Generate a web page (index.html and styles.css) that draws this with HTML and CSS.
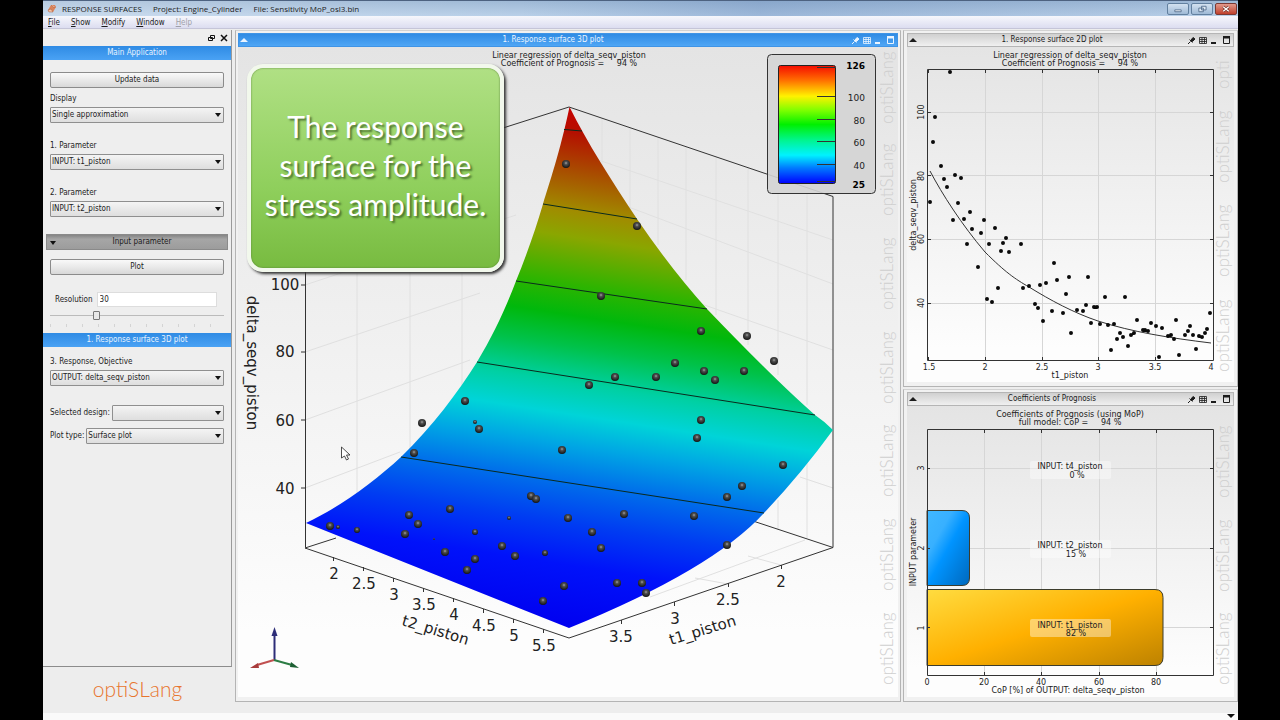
FILE: index.html
```html
<!DOCTYPE html>
<html lang="en">
<head>
<meta charset="utf-8">
<title>RESPONSE SURFACES - Engine_Cylinder</title>
<link rel="stylesheet" href="styles.css">
</head>
<body>
<svg class="defs" aria-hidden="true">
  <defs>
    <symbol id="panel-tools" viewBox="0 0 44 10">
      <path d="M1 9 3.500 6.500M2.500 4.500 5.500 7.500M4 5 6 2.500 8 4 5.500 6.500z" fill="currentColor" stroke="currentColor" stroke-width="1"/>
      <path d="M12.500 2.500h7v6h-7zM12.500 4.500h7M12.500 6.500h7M15 2.500v6M17.500 2.500v6" fill="none" stroke="currentColor" stroke-width=".8"/>
      <path d="M24 7h5v2h-5z" fill="currentColor"/>
      <path d="M36.500 2.500h6v6h-6z" fill="none" stroke="currentColor"/><path d="M36 1h7v2.500h-7z" fill="currentColor"/>
    </symbol>
    <symbol id="collapse" viewBox="0 0 8 6"><path d="M0 5 4 1l4 4z" fill="currentColor"/></symbol>
  </defs>
</svg>
<div class="app">
  <header class="titlebar">
    <svg class="app-icon" viewBox="0 0 10 10"><path d="M1 6 4 1h4l1 2-3 5H2z" fill="#d9835c"/><path d="M1 6l3-1 2 3H2zM4 1l2 2 3 0" fill="#f4c4a8" stroke="#a85b3b" stroke-width=".5"/></svg>
    <span>RESPONSE SURFACES</span><span>Project: Engine_Cylinder</span><span>File: Sensitivity MoP_osl3.bin</span>
    <div class="win-buttons">
      <button aria-label="Minimize"><svg viewBox="0 0 22 11"><path d="M7.500 6.500h7v2h-7z" fill="#fff" stroke="#56718f"/></svg></button>
      <button aria-label="Restore"><svg viewBox="0 0 22 11"><path d="M10.500 2.500h5v4h-5zM7.500 4.500h5v4h-5z" fill="#dfe9f4" stroke="#56718f"/></svg></button>
      <button class="close" aria-label="Close"><svg viewBox="0 0 22 11"><path d="m8 3 6 5m0-5-6 5" stroke="#6b2a22" stroke-width="3"/><path d="m8 3 6 5m0-5-6 5" stroke="#fff" stroke-width="1.500"/></svg></button>
    </div>
  </header>
  <nav class="menubar">
    <button><u>F</u>ile</button><button><u>S</u>how</button><button><u>M</u>odify</button><button><u>W</u>indow</button><button disabled><u>H</u>elp</button>
  </nav>
  <main class="workspace">
    <div class="side-column">
      <aside class="sidebar">
        <div class="dock">
          <button aria-label="Float"><svg viewBox="0 0 8 8"><path d="M2.500 1.500h4v3h-4zM.5 3.500h4v3h-4z" fill="#eee" stroke="#111"/></svg></button>
          <button aria-label="Close panel"><svg viewBox="0 0 8 8"><path d="m1 1 6 6m0-6-6 6" stroke="#111" stroke-width="1.500"/></svg></button>
        </div>
        <h2 class="section-title">Main Application</h2>
        <form class="fields">
          <button type="button" class="push">Update data</button>
          <div class="field"><label for="display">Display</label><span class="combo"><select id="display"><option>Single approximation</option></select></span></div>
          <div class="field spaced"><label for="p1">1. Parameter</label><span class="combo"><select id="p1"><option>INPUT: t1_piston</option></select></span></div>
          <div class="field spaced"><label for="p2">2. Parameter</label><span class="combo"><select id="p2"><option>INPUT: t2_piston</option></select></span></div>
          <button type="button" class="fold">Input parameter</button>
          <button type="button" class="push">Plot</button>
          <div class="resolution"><label for="res">Resolution</label><input id="res" type="text" value="30"></div>
          <div class="slider"><input type="range" min="0" max="100" value="26" aria-label="Resolution slider"></div>
        </form>
        <h2 class="section-title">1. Response surface 3D plot</h2>
        <form class="fields plot-fields">
          <div class="field"><label for="resp">3. Response, Objective</label><span class="combo"><select id="resp"><option>OUTPUT: delta_seqv_piston</option></select></span></div>
          <div class="row first"><label for="sel">Selected design:</label><span class="combo"><select id="sel"><option></option></select></span></div>
          <div class="row"><label for="type">Plot type:</label><span class="combo"><select id="type"><option>Surface plot</option></select></span></div>
        </form>
      </aside>
      <div class="logo">optiSLang</div>
    </div>

    <section class="panel panel-3d">
      <h2 class="panel-title active"><svg class="collapse"><use href="#collapse"/></svg><span>1. Response surface 3D plot</span><svg class="tools"><use href="#panel-tools"/></svg></h2>
      <div class="panel-body">
        <svg class="plot" viewBox="238 47 660 650">
          <defs>
            <linearGradient id="surf" gradientUnits="userSpaceOnUse" x1="569" y1="106" x2="491" y2="616">
              <stop offset="0" stop-color="#c80000"/><stop offset=".05" stop-color="#b41000"/><stop offset=".12" stop-color="#a94a00"/><stop offset=".2" stop-color="#a08c00"/><stop offset=".25" stop-color="#8aa600"/><stop offset=".34" stop-color="#2eb400"/><stop offset=".4" stop-color="#00b80c"/><stop offset=".46" stop-color="#00c24a"/><stop offset=".53" stop-color="#00d0a4"/><stop offset=".59" stop-color="#00d4d8"/><stop offset=".65" stop-color="#00a6e4"/><stop offset=".72" stop-color="#006fea"/><stop offset=".8" stop-color="#003cf2"/><stop offset=".88" stop-color="#0012fa"/><stop offset="1" stop-color="#0000f0"/>
            </linearGradient>
            <linearGradient id="scale" x1="0" y1="0" x2="0" y2="1">
              <stop offset="0" stop-color="#f50c00"/><stop offset=".12" stop-color="#ff6a00"/><stop offset=".26" stop-color="#fff200"/><stop offset=".38" stop-color="#7dff00"/><stop offset=".5" stop-color="#00f000"/><stop offset=".63" stop-color="#00f58c"/><stop offset=".76" stop-color="#00f2ff"/><stop offset=".87" stop-color="#0078ff"/><stop offset="1" stop-color="#0000ff"/>
            </linearGradient>
            <radialGradient id="ball" cx=".5" cy=".38" r=".6"><stop offset="0" stop-color="#a0a0a0"/><stop offset=".35" stop-color="#4c4c4c"/><stop offset="1" stop-color="#151515"/></radialGradient>
          </defs>
          <g class="watermark">
            <text transform="translate(893 685) rotate(-90)">optiSLang</text><text transform="translate(893 591) rotate(-90)">optiSLang</text><text transform="translate(893 497) rotate(-90)">optiSLang</text><text transform="translate(893 404) rotate(-90)">optiSLang</text><text transform="translate(893 310) rotate(-90)">optiSLang</text><text transform="translate(893 216) rotate(-90)">optiSLang</text><text transform="translate(893 124) rotate(-90)">optiSLang</text>
          </g>
          <path class="grid" d="M357 272V500M410 272V470M462 272V390M602 118V170M630 127V210M658 137V245M686 146V280M716 156V315M748 167V345M778 178V375M807 188V405M807 455V538M778 500V530M305 285 516 215M305 352 480 293M305 420 470 360M305 488 400 452M569 150 833 240M610 200 833 284M690 300 833 350M800 477 833 488M650 597 805 540M695 578 728 584M748 556 781 565"/>
          <path class="axis" d="M305.500 190V547.500M305 548 569 638 833 547.500M305 191 569 107 833 196.500V547.500M305 548l31-10M753 521l80 26.500M301 285h4M301 352h4M301 420h4M301 488h4M333.500 557v4M363.500 567v4M393.500 578v4M423.500 588v4M453.500 598v4M483.500 609v4M513.500 619v4M543.500 629v4M781.500 565v4M728.500 583v4M674.500 602v4M621.500 620v4"/>
          <path fill="url(#surf)" d="M569.500 107C560 152 549 184 543 204 536 228 527 254 516 281 507 305 494 334 477 362 458 392 433 426 401 457 375 481 342 506 306 523L569 628Q712 570 764 513 801 474 833 430 824 421 815 415 777 382 707 309 671 269 637 219C610 178 588 144 569.500 107z"/>
          <path class="contour" d="M401 457 764 513M477 362 815 415M516 281 707 309M543 204 637 219M564 129.500 582 131"/>
          <g fill="url(#ball)">
            <circle cx="566" cy="164" r="4"/><circle cx="637" cy="226" r="4"/><circle cx="601" cy="296" r="4"/><circle cx="701" cy="331" r="4"/><circle cx="747" cy="336" r="4"/><circle cx="774" cy="361" r="4"/><circle cx="675" cy="363" r="4"/><circle cx="704" cy="371" r="4"/><circle cx="715" cy="380" r="4"/><circle cx="744" cy="371" r="4"/><circle cx="615" cy="377" r="4"/><circle cx="656" cy="377" r="4"/><circle cx="589" cy="385" r="4"/><circle cx="701" cy="420" r="4"/><circle cx="697" cy="438" r="4"/><circle cx="783" cy="465" r="4"/><circle cx="562" cy="450" r="4"/><circle cx="465" cy="401" r="4"/><circle cx="422" cy="423" r="4"/><circle cx="479" cy="429" r="4"/><circle cx="414" cy="453" r="4"/><circle cx="742" cy="486" r="4"/><circle cx="727" cy="497" r="4"/><circle cx="694" cy="516" r="4"/><circle cx="624" cy="514" r="4"/><circle cx="568" cy="518" r="4"/><circle cx="592" cy="532" r="4"/><circle cx="601" cy="548" r="4"/><circle cx="727" cy="545" r="4"/><circle cx="564" cy="586" r="4"/><circle cx="617" cy="583" r="4"/><circle cx="642" cy="583" r="4"/><circle cx="646" cy="593" r="4"/><circle cx="531" cy="496" r="4"/><circle cx="536" cy="499" r="4"/><circle cx="450" cy="509" r="4"/><circle cx="409" cy="515" r="4"/><circle cx="418" cy="524" r="4"/><circle cx="405" cy="534" r="4"/><circle cx="330" cy="526" r="4"/><circle cx="502" cy="546" r="4"/><circle cx="515" cy="556" r="4"/><circle cx="445" cy="552" r="4"/><circle cx="475" cy="559" r="4"/><circle cx="467" cy="570" r="4"/><circle cx="543" cy="601" r="4"/><circle cx="545" cy="553" r="3"/><circle cx="475" cy="532" r="3"/><circle cx="357" cy="530" r="3"/><circle cx="338" cy="527" r="2"/><circle cx="475" cy="422" r="2"/><circle cx="509" cy="518" r="2"/><circle cx="434" cy="539" r="1"/>
          </g>
          <g class="plot-title"><text x="569" y="58">Linear regression of delta_seqv_piston</text><text x="569" y="66" xml:space="preserve">Coefficient of Prognosis =     94 %</text></g>
          <g class="big-label">
            <text x="285" y="290">100</text><text x="285" y="357">80</text><text x="285" y="426">60</text><text x="285" y="494">40</text>
            <text x="334" y="579">2</text><text x="364" y="589">2.5</text><text x="394" y="600">3</text><text x="424" y="610">3.5</text><text x="454" y="620">4</text><text x="484" y="631">4.5</text><text x="514" y="641">5</text><text x="544" y="651">5.5</text>
            <text x="781" y="587">2</text><text x="728" y="605">2.5</text><text x="675" y="624">3</text><text x="621" y="642">3.5</text>
            <text transform="translate(247 363) rotate(90)">delta_seqv_piston</text><text transform="translate(434 635) rotate(17)">t2_piston</text><text transform="translate(704 635) rotate(-17)">t1_piston</text>
          </g>
          <rect x="767.500" y="54.500" width="108" height="139" rx="4" fill="#d4d4d4" fill-opacity=".9" stroke="#333"/>
          <rect x="778.500" y="65.500" width="57" height="118" rx="2" fill="url(#scale)" stroke="#222"/>
          <path class="axis" d="M817 67.500h18M817 96.500h18M817 119.500h18M817 141.500h18M817 164.500h18M817 181.500h18"/>
          <g class="legend"><text class="bold" x="865" y="69">126</text><text x="865" y="101">100</text><text x="865" y="124">80</text><text x="865" y="146">60</text><text x="865" y="169">40</text><text class="bold" x="865" y="188">25</text></g>
          <path d="M274.500 660V636" stroke="#2d2d78" stroke-width="2"/><path d="m274.500 627 3 9h-6z" fill="#2d2d78"/>
          <path d="M274 660 257 665" stroke="#c05050" stroke-width="2"/><path d="m250 668 8-5 1 5z" fill="#a83c3c"/>
          <path d="m274 660 18 5" stroke="#2c7c44" stroke-width="2"/><path d="m299 668-8-6-1 5z" fill="#1d5f33"/>
          <path d="M341.500 447v11l3-2 2 4 2-1-2-4h3.500z" fill="#fff" stroke="#222" stroke-width=".8"/>
        </svg>
        <div class="callout">The response surface for the stress amplitude.</div>
      </div>
    </section>

    <div class="right-column">
      <section class="panel">
        <h2 class="panel-title"><svg class="collapse"><use href="#collapse"/></svg><span>1. Response surface 2D plot</span><svg class="tools"><use href="#panel-tools"/></svg></h2>
        <div class="panel-body">
          <svg class="plot" viewBox="907 47 327 335">
            <g class="watermark"><text transform="translate(1229 372) rotate(-90)">optiSLang</text><text transform="translate(1229 277) rotate(-90)">optiSLang</text><text transform="translate(1229 183) rotate(-90)">optiSLang</text><text transform="translate(1229 89) rotate(-90)">opti</text></g>
            <path class="grid2" d="M985.500 70v290M1042.500 70v290M1098.500 70v290M1155.500 70v290M928 112.500h285M928 175.500h285M928 239.500h285M928 303.500h285"/>
            <path class="axis" d="M927.500 69.500h286v291h-286zM928.500 70v3M985.500 70v3M1042.500 70v3M1098.500 70v3M1155.500 70v3M928.500 360v-3M985.500 360v-3M1042.500 360v-3M1098.500 360v-3M1155.500 360v-3M928 112.500h3M928 175.500h3M928 239.500h3M928 303.500h3M1213 112.500h-3M1213 175.500h-3M1213 239.500h-3M1213 303.500h-3"/>
            <path class="axis" d="M930 171C942 194 962 225 985 252 1005 272 1015 279 1029 287 1050 300 1074 313 1098 321 1132 332 1170 338 1211 343"/>
            <path class="dots" d="M950 72h0M935 117h0M933 142h0M941 166h0M944 179h0M955 175h0M961 178h0M947 187h0M930 202h0M958 203h0M953 220h0M964 219h0M970 212h0M972 229h0M967 244h0M981 233h0M984 220h0M989 244h0M995 228h0M978 267h0M987 299h0M992 302h0M998 288h0M1001 251h0M1003 243h0M1006 238h0M1009 252h0M1021 244h0M1023 288h0M1029 286h0M1035 304h0M1038 308h0M1040 285h0M1046 283h0M1043 321h0M1052 311h0M1054 263h0M1057 280h0M1069 277h0M1066 294h0M1063 313h0M1071 333h0M1077 310h0M1083 311h0M1086 305h0M1088 277h0M1094 307h0M1097 307h0M1091 323h0M1100 324h0M1105 297h0M1125 297h0M1108 325h0M1114 324h0M1111 350h0M1117 339h0M1120 333h0M1123 337h0M1128 346h0M1131 335h0M1134 333h0M1137 320h0M1143 330h0M1145 330h0M1148 331h0M1151 323h0M1156 326h0M1162 328h0M1159 357h0M1168 336h0M1171 335h0M1174 339h0M1176 320h0M1179 355h0M1185 335h0M1188 331h0M1190 326h0M1193 335h0M1196 349h0M1199 336h0M1202 337h0M1205 333h0M1207 329h0M1210 313h0"/>
            <g class="plot-title"><text x="1070" y="58">Linear regression of delta_seqv_piston</text><text x="1070" y="66" xml:space="preserve">Coefficient of Prognosis =     94 %</text>
              <text x="929" y="370">1.5</text><text x="985" y="370">2</text><text x="1042" y="370">2.5</text><text x="1098" y="370">3</text><text x="1155" y="370">3.5</text><text x="1211" y="370">4</text><text x="1070" y="378">t1_piston</text>
              <text transform="translate(924 112) rotate(-90)">100</text><text transform="translate(924 176) rotate(-90)">80</text><text transform="translate(924 239) rotate(-90)">60</text><text transform="translate(924 303) rotate(-90)">40</text><text transform="translate(916 215) rotate(-90)">delta_seqv_piston</text></g>
          </svg>
        </div>
      </section>
      <section class="panel">
        <h2 class="panel-title"><svg class="collapse"><use href="#collapse"/></svg><span>Coefficients of Prognosis</span><svg class="tools"><use href="#panel-tools"/></svg></h2>
        <div class="panel-body">
          <svg class="plot" viewBox="907 406 327 291">
            <defs>
              <linearGradient id="blue" x1="0" y1="0" x2="1" y2="1"><stop offset="0" stop-color="#40b8ff"/><stop offset=".3" stop-color="#38b0ff"/><stop offset=".5" stop-color="#0094ff"/><stop offset="1" stop-color="#0068bc"/></linearGradient>
              <linearGradient id="gold" x1="0" y1="0" x2="1" y2="1"><stop offset="0" stop-color="#ffdc40"/><stop offset=".5" stop-color="#ffb000"/><stop offset="1" stop-color="#bd8200"/></linearGradient>
            </defs>
            <g class="watermark"><text transform="translate(1229 685) rotate(-90)">optiSLang</text><text transform="translate(1229 592) rotate(-90)">optiSLang</text><text transform="translate(1229 498) rotate(-90)">optiSLang</text></g>
            <path class="grid2" d="M984.500 430v245M1041.500 430v245M1099.500 430v245M1156.500 430v245M927 468.500h286M927 548.500h286M927 627.500h286"/>
            <path fill="url(#blue)" class="bar" d="M927 510.500h35q7.500 0 7.500 7.500v60q0 7.500-7.500 7.500h-35z"/>
            <path fill="url(#gold)" class="bar" d="M927 589.500h228q8 0 8 8v60q0 8-8 8H927z"/>
            <path class="axis" d="M927.500 429.500h286v246h-286zM984.500 430v3M1041.500 430v3M1099.500 430v3M1156.500 430v3M984.500 675v-3M1041.500 675v-3M1099.500 675v-3M1156.500 675v-3M927 468.500h3M927 548.500h3M927 627.500h3M1213 468.500h-3M1213 548.500h-3M1213 627.500h-3"/>
            <g fill="#fff" fill-opacity=".4"><rect x="1030" y="461" width="81" height="18" rx="2"/><rect x="1030" y="540" width="81" height="18" rx="2"/><rect x="1030" y="619" width="81" height="18" rx="2"/></g>
            <g class="plot-title"><text x="1070" y="417">Coefficients of Prognosis (using MoP)</text><text x="1070" y="425" xml:space="preserve">full model: CoP =     94 %</text>
              <text x="1070" y="469">INPUT: t4_piston</text><text x="1077" y="478">0 %</text><text x="1070" y="548">INPUT: t2_piston</text><text x="1076" y="557">15 %</text><text x="1070" y="628">INPUT: t1_piston</text><text x="1076" y="636">82 %</text>
              <text x="927" y="685">0</text><text x="984" y="685">20</text><text x="1041" y="685">40</text><text x="1099" y="685">60</text><text x="1156" y="685">80</text><text x="1068" y="693">CoP [%] of OUTPUT: delta_seqv_piston</text>
              <text transform="translate(924 468) rotate(-90)">3</text><text transform="translate(924 548) rotate(-90)">2</text><text transform="translate(924 628) rotate(-90)">1</text><text transform="translate(916 552) rotate(-90)">INPUT parameter</text></g>
          </svg>
        </div>
      </section>
    </div>
  </main>
  <footer class="status"><svg viewBox="0 0 8 5"><path d="M0 1h8L4 5z" fill="#111"/></svg></footer>
</div>
</body>
</html>
```
FILE: styles.css
```css
* { box-sizing: border-box; }
body {
  margin: 0;
  background: #000;
  color: #1c1c1c;
  font-family: "DejaVu Sans Condensed", "Noto Sans", sans-serif;
  font-size: 8px;
  line-height: 10px;
}
button, input, select { font: inherit; color: inherit; margin: 0; }
.defs { position: absolute; width: 0; height: 0; }

.app {
  display: flex;
  flex-direction: column;
  min-height: 100vh;
  margin: 0 42px 0 43px;
  background: #ededed;
}

.titlebar {
  display: flex;
  align-items: center;
  gap: 11px;
  height: 16px;
  padding: 0 1px 0 4px;
  border-top: 1px solid #4d6280;
  background: linear-gradient(90deg, rgba(255,255,255,.25), transparent 40%, rgba(70,110,170,.25) 60%, transparent), linear-gradient(#9fb9d6, #b9d0e8);
  font: 8px/14px "Open Sans", "Noto Sans", sans-serif;
}
.app-icon { width: 10px; height: 10px; margin-right: -6px; }
.win-buttons { display: flex; gap: 2px; margin-left: auto; }
.win-buttons button {
  width: 22px;
  height: 12px;
  padding: 0;
  border: 1px solid #62809f;
  border-radius: 2px;
  background: linear-gradient(#d3e1f0, #9fbad6);
}
.win-buttons .close { border-color: #7b3a34; background: linear-gradient(#e39a8c, #c0402c); }
.win-buttons svg { display: block; width: 100%; height: 100%; }

.menubar {
  display: flex;
  gap: 11px;
  height: 13px;
  padding: 0 5px;
  border-bottom: 1px solid #c5c5d8;
  background: linear-gradient(#f6f7fc, #dcddf0);
}
.menubar button { padding: 0; border: 0; background: none; line-height: 11px; }
.menubar button:disabled { color: #a0a0a8; }

.workspace {
  display: grid;
  grid-template-columns: 190px minmax(0, 666fr) minmax(0, 335fr);
  column-gap: 2px;
  flex: 1;
  padding-top: 1px;
}

.side-column { display: flex; flex-direction: column; padding-right: 1px; }
.sidebar {
  flex: 1;
  border-right: 1px solid #9a9a9a;
  border-bottom: 1px solid #8c8c8c;
  background: #eee;
}
.dock { display: flex; justify-content: flex-end; align-items: center; gap: 4px; height: 16px; padding-right: 3px; }
.dock button { width: 8px; height: 8px; padding: 0; border: 0; background: none; }
.dock svg { display: block; width: 8px; height: 8px; }
.section-title {
  margin: 0;
  color: #e8f3ff;
  background: linear-gradient(#2f8be4, #4aa2f4);
  font-size: 8px;
  font-weight: 400;
  line-height: 14px;
  text-align: center;
}
.fields { display: flex; flex-direction: column; padding: 12px 7px 12px; }
.push {
  height: 16px;
  padding: 0;
  border: 1px solid #8b8b8b;
  border-radius: 2px;
  background: linear-gradient(#f9f9f9, #e6e6e6 60%, #d8d8d8);
  line-height: 12px;
}
.field { display: flex; flex-direction: column; gap: 3px; margin-top: 6px; }
.field.spaced { margin-top: 18px; }
.combo { position: relative; display: block; flex: 1; min-width: 0; }
.combo::after {
  content: "";
  position: absolute;
  right: 3px;
  top: 6px;
  border: 3px solid transparent;
  border-top: 4px solid #111;
  border-bottom: 0;
  pointer-events: none;
}
select {
  display: block;
  width: 100%;
  height: 16px;
  padding: 0 1px;
  border: 1px solid #8f8f8f;
  border-radius: 1px;
  background: linear-gradient(#f4f4f4, #dedede);
  appearance: none;
}
.fold {
  position: relative;
  height: 16px;
  margin: 17px -4px 9px;
  padding: 0 0 0 10px;
  border: 1px solid #8a8a8a;
  background: linear-gradient(#858585, #a6a6a6 30%, #9c9c9c);
}
.fold::before { content: ""; position: absolute; left: 3px; top: 6px; border: 3px solid transparent; border-top: 4px solid #111; border-bottom: 0; }
.resolution { display: flex; align-items: center; gap: 4px; margin: 17px 7px 0 5px; }
.resolution label { white-space: nowrap; }
.resolution input { flex: 1; min-width: 0; height: 15px; padding: 0 2px; border: 1px solid #ddd; background: #fff; }
.slider { padding-bottom: 4px; background: repeating-linear-gradient(90deg, #d4d4d4 0 1px, transparent 1px 16px) bottom / 100% 3px no-repeat; }
.slider input { display: block; width: 100%; height: 16px; appearance: none; background: linear-gradient(#bbb, #bbb) center / 100% 1px no-repeat; }
.slider input::-webkit-slider-thumb { appearance: none; width: 7px; height: 9px; border: 1px solid #777; border-radius: 1px; background: #e8e8e8; }
.fields:first-of-type { padding-bottom: 6px; }
.plot-fields { padding-top: 4px; }
.row { display: flex; align-items: center; gap: 2px; margin-top: 7px; }
.row.first { margin-top: 19px; }
.row label { white-space: nowrap; }
.logo {
  height: 46px;
  color: #e8752e;
  font: 300 21px/44px Lato, sans-serif;
  text-align: center;
}

.panel { border: 1px solid #b4b4b4; border-top-color: #d2d2d2; padding: 2px 3px 4px; background: #f1f1f1; }
.panel-3d { align-self: start; padding: 2px 2px 4px; }
.panel-title {
  display: flex;
  align-items: center;
  height: 14px;
  margin: 0;
  padding: 0 2px 0 1px;
  border: 1px solid #b5b5b5;
  background: linear-gradient(#d0d0d0, #f0f0f0);
  font-size: 8px;
  font-weight: 400;
}
.panel-title.active { color: #eaf4ff; border-color: #3f94e6; background: linear-gradient(#2f8be4, #4fa6f5); }
.panel-title span { flex: 1; padding-left: 7px; text-align: center; }
.panel:not(.panel-3d) .panel-title span { padding-left: 0; }
.collapse { width: 8px; height: 6px; }
.tools { width: 44px; height: 10px; }
.panel-body { position: relative; background: linear-gradient(#e4e4e4, #fdfdfd 90%); }
.plot { display: block; width: 100%; height: auto; font-family: "DejaVu Sans", sans-serif; }
.right-column { display: flex; flex-direction: column; align-self: start; gap: 2px; }

.watermark { fill: #cfcfcf; font: 300 17px Lato, sans-serif; }
.grid { fill: none; stroke: #e0e0e0; }
.grid2 { fill: none; stroke: #d6d6d6; }
.axis { fill: none; stroke: #333; stroke-width: 1; }
.contour { fill: none; stroke: #0a2a1e; stroke-width: 1; }
.dots { fill: none; stroke: #0a0a0a; stroke-width: 4; stroke-linecap: round; }
.bar { stroke: #3c3c2c; }
.plot-title { font-size: 8px; text-anchor: middle; fill: #222; }
.big-label { font-size: 15px; text-anchor: middle; fill: #222; }
.legend { font-size: 9px; text-anchor: end; fill: #222; }
.bold { font-weight: 700; fill: #000; }

.callout {
  position: absolute;
  left: 9px;
  top: 17px;
  display: flex;
  align-items: center;
  width: 257px;
  height: 208px;
  padding: 0 4px 6px;
  border: 4px solid #f2f8ec;
  border-radius: 16px;
  background: linear-gradient(#b0e084, #8fcf5c 60%, #78bb40);
  box-shadow: 2px 2px 3px #333, inset 0 0 2px #567a3a;
  color: #fff;
  font: 30px/39px Lato, sans-serif;
  text-align: center;
  text-shadow: 2px 2px 2px rgba(50, 80, 30, .7);
}
.status { display: flex; justify-content: flex-end; align-items: flex-start; height: 7px; padding: 0 3px; background: #fafafa; }
.status svg { width: 8px; height: 5px; }
```
